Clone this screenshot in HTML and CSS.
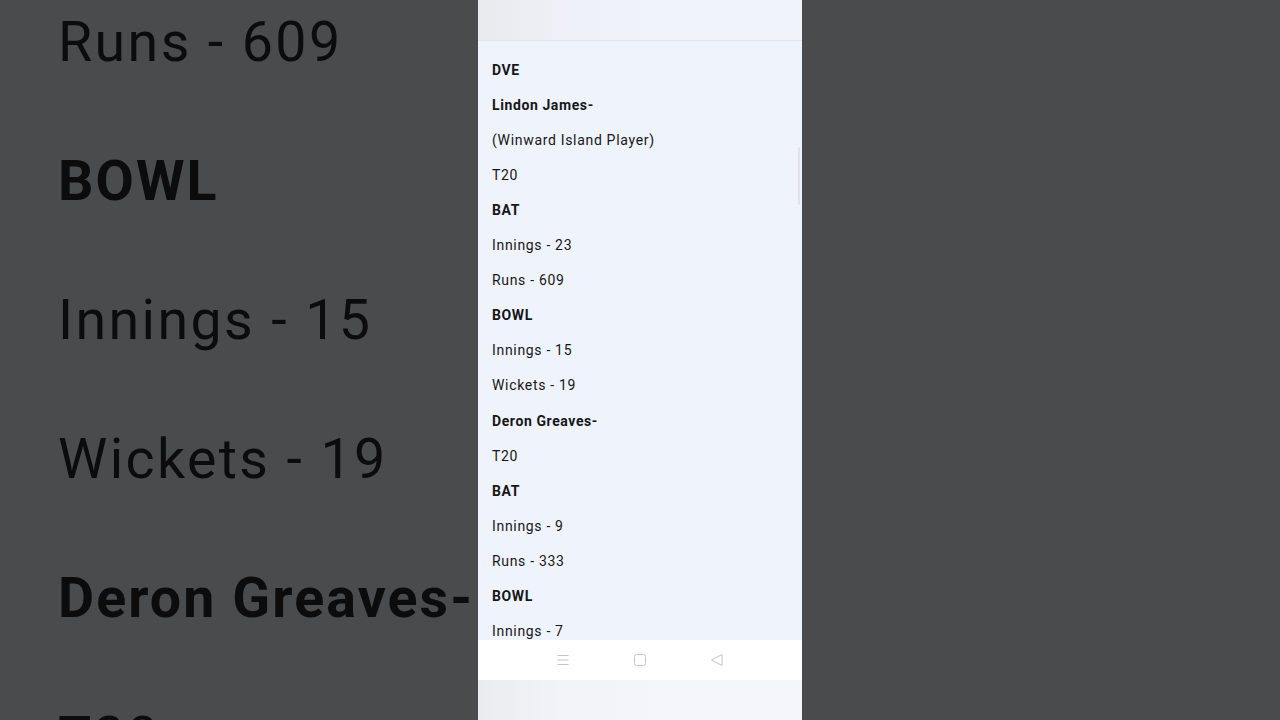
FILE: index.html
```html
<!DOCTYPE html>
<html lang="en">
<head>
<meta charset="utf-8">
<title>Player stats</title>
<link rel="stylesheet" href="styles.css">
</head>
<body>
<div class="frame">
  <div class="side side-left">
    <div class="bg-list">
      <p class="bg-line">Runs - 609</p>
      <p class="bg-line bold">BOWL</p>
      <p class="bg-line">Innings - 15</p>
      <p class="bg-line">Wickets - 19</p>
      <p class="bg-line bold">Deron Greaves-</p>
      <p class="bg-line">T20</p>
    </div>
  </div>
  <div class="phone">
    <div class="topbar"></div>
    <div class="content">
      <div class="scrollbar"></div>
      <p class="row bold">DVE</p>
      <p class="row bold">Lindon James-</p>
      <p class="row">(Winward Island Player)</p>
      <p class="row">T20</p>
      <p class="row bold">BAT</p>
      <p class="row">Innings - 23</p>
      <p class="row">Runs - 609</p>
      <p class="row bold">BOWL</p>
      <p class="row">Innings - 15</p>
      <p class="row">Wickets - 19</p>
      <p class="row bold">Deron Greaves-</p>
      <p class="row">T20</p>
      <p class="row bold">BAT</p>
      <p class="row">Innings - 9</p>
      <p class="row">Runs - 333</p>
      <p class="row bold">BOWL</p>
      <p class="row">Innings - 7</p>
    </div>
    <div class="navbar">
      <svg class="nav-icon" width="14" height="14" viewBox="0 0 14 14"><path d="M1.5 2.5h11M1.5 7h11M1.5 11.5h11" fill="none" stroke="#c4c4c6" stroke-width="1"/></svg>
      <svg class="nav-icon" width="14" height="14" viewBox="0 0 14 14"><rect x="1.5" y="1.5" width="11" height="11" rx="2" fill="none" stroke="#c4c4c6" stroke-width="1"/></svg>
      <svg class="nav-icon" width="14" height="14" viewBox="0 0 14 14"><path d="M12 1.5L1.5 7L12 12.5Z" fill="none" stroke="#c4c4c6" stroke-width="1" stroke-linejoin="round"/></svg>
    </div>
    <div class="bottom"></div>
  </div>
  <div class="side side-right"></div>
</div>
</body>
</html>
```

FILE: styles.css
```css
html, body {
  margin: 0;
  padding: 0;
  width: 1280px;
  height: 720px;
  overflow: hidden;
  background: #4a4b4d;
  font-family: Roboto, "Liberation Sans", sans-serif;
}

.frame {
  display: flex;
  width: 1280px;
  height: 720px;
}

.side {
  width: 478px;
  height: 720px;
  overflow: hidden;
  background: #4a4b4d;
  flex: none;
}

.bg-list {
  margin-top: -27px;
  padding-left: 58px;
}

.bg-line {
  margin: 0;
  font-size: 55.5px;
  line-height: 139px;
  letter-spacing: 2.4px;
  color: #0c0c0d;
  white-space: nowrap;
  filter: blur(0.6px);
}

.bg-line.bold {
  font-weight: 700;
  letter-spacing: 2.1px;
}

.phone {
  width: 324px;
  height: 720px;
  flex: none;
  display: flex;
  flex-direction: column;
  background: #eff3fb;
}

.topbar {
  height: 40px;
  flex: none;
  border-bottom: 1px solid #e2e5ec;
  background: linear-gradient(to right, #e8eaee 0%, #eef1f7 30%, #f0f3fa 60%, #f0f3fa 100%);
}

.content {
  position: relative;
  height: 599px;
  flex: none;
  overflow: hidden;
  padding: 11.5px 0 0 14px;
  box-sizing: border-box;
  background: #eff3fb;
}

.scrollbar {
  position: absolute;
  right: 2px;
  top: 106px;
  width: 2px;
  height: 58px;
  background: #e1e3e8;
  border-radius: 1px;
}

.row {
  margin: 0;
  height: 35.12px;
  line-height: 35px;
  font-size: 14px;
  letter-spacing: 0.68px;
  color: #161718;
  white-space: nowrap;
}

.row.bold {
  font-weight: 700;
  letter-spacing: 0.6px;
}

.navbar {
  height: 40px;
  flex: none;
  background: #ffffff;
  display: flex;
  align-items: center;
  justify-content: center;
  gap: 63px;
}

.nav-icon {
  display: block;
}

.bottom {
  flex: 1;
  background: linear-gradient(to right, #e9ebef 0%, #f1f3f8 25%, #f4f6fb 60%, #f4f6fb 100%);
}
```
